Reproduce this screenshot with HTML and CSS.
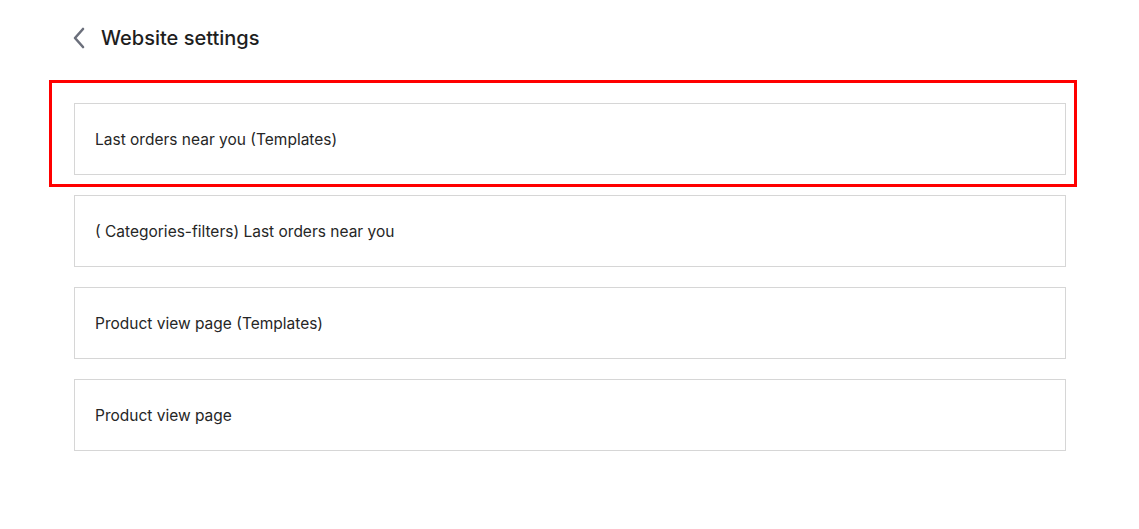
FILE: index.html
```html
<!DOCTYPE html>
<html lang="en">
  <head>
    <meta charset="UTF-8" />
    <meta name="viewport" content="width=device-width, initial-scale=1.0" />
    <title>Website settings</title>
    <link rel="stylesheet" href="styles.css">
  </head>
  <body>
    <div class="page">
      <div class="header">
        <a href="javascript:;" class="back">
          <svg width="14" height="22" viewBox="0 0 14 22">
            <path d="M11 2 L3 11 L11 20" fill="none" stroke="#6b6f7b" stroke-width="2.6" stroke-linecap="round" stroke-linejoin="round" />
          </svg>
        </a>
        <h1>Website settings</h1>
      </div>
      <div class="list">
        <div class="item highlighted">Last orders near you (Templates)</div>
        <div class="item">( Categories-filters) Last orders near you</div>
        <div class="item">Product view page (Templates)</div>
        <div class="item">Product view page</div>
      </div>
    </div>
  </body>
</html>
```

FILE: styles.css
```css
* {
  margin: 0;
  padding: 0;
  box-sizing: border-box;
}
a {
  text-decoration: none;
}
html,
body {
  width: 100%;
  height: 100%;
  background-color: #fff;
  font-family: 'Inter', 'Noto Sans', sans-serif;
  color: #222;
}
.page {
  padding: 26px 73px 0 74px;
}
.header {
  display: flex;
  align-items: center;
  height: 24px;
}
.back {
  display: flex;
  align-items: center;
  width: 29px;
  margin-left: -2px;
}
h1 {
  font-size: 20px;
  font-weight: 500;
  color: #1e1e1e;
}
.list {
  display: flex;
  flex-direction: column;
  gap: 20px;
  margin-top: 53px;
}
.item {
  position: relative;
  height: 72px;
  border: 1px solid #d6d6d6;
  padding-left: 20px;
  display: flex;
  align-items: center;
  font-size: 15.5px;
  color: #262626;
}
/* 红框标注 */
.highlighted::after {
  content: '';
  position: absolute;
  left: -26px;
  right: -12px;
  top: -24px;
  bottom: -13px;
  border: 3px solid #f00;
  pointer-events: none;
}
```
